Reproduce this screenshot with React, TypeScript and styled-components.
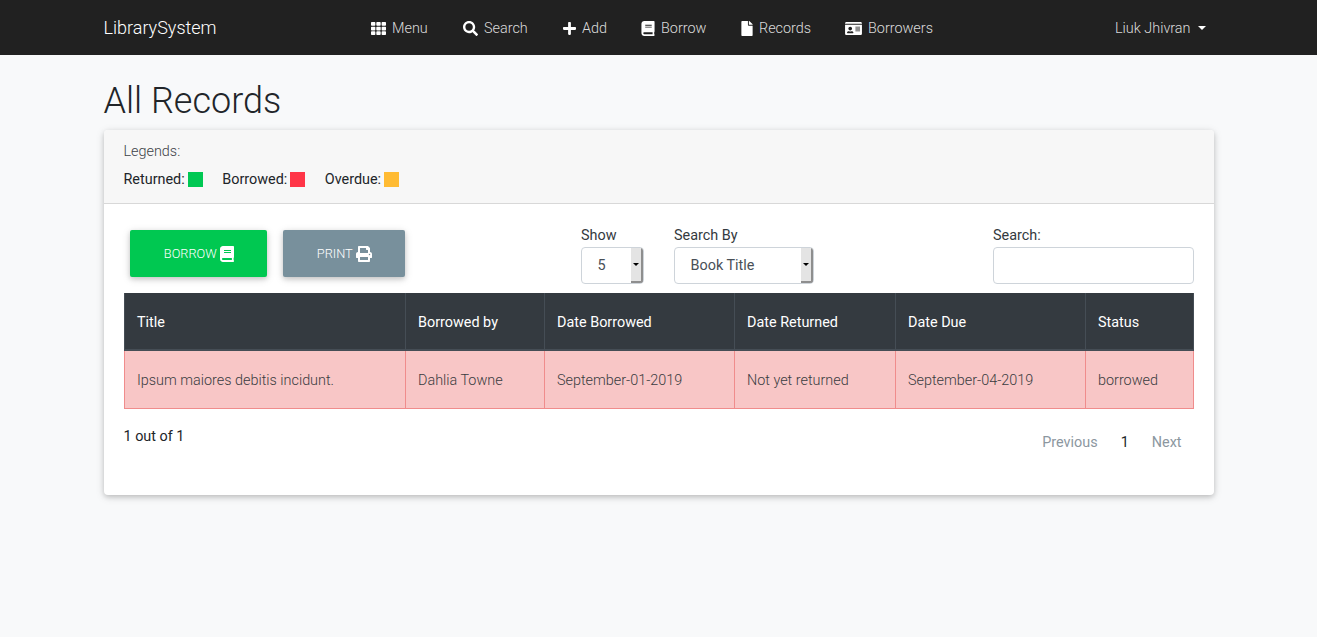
import { createGlobalStyle } from 'styled-components';
import styled from 'styled-components';
import { FaTh, FaSearch, FaPlus, FaBook, FaFile, FaIdCard, FaPrint } from 'react-icons/fa';

const GlobalStyle = createGlobalStyle`
  body {
    margin: 0;
    min-height: 100vh;
    background: #f8f9fa;
    font-family: Roboto, "Liberation Sans", sans-serif;
    font-size: 14px;
    font-weight: 300;
    color: #212529;
  }
`

const Navbar = styled.nav`
  height: 55px;
  background: #212121;
  color: #fff;
`

const Container = styled.div`
  width: 1110px;
  margin: 0 auto;
`

const NavInner = styled(Container)`
  height: 100%;
  display: flex;
  align-items: center;
`

const Brand = styled.a`
  font-size: 18px;
  font-weight: 300;
  width: 267px;
`

const NavLinks = styled.div`
  display: flex;
  flex: 1;
  margin-top: 1px;
`

const NavLink = styled.a<{ $width: number; $icon: number }>`
  display: flex;
  align-items: center;
  gap: 6.5px;
  width: ${p => p.$width}px;
  font-size: 14.4px;
  color: rgba(255, 255, 255, 0.85);
  svg {
    color: #fff;
    height: 15px;
    width: ${p => p.$icon}px;
  }
`

const UserMenu = styled.a`
  display: flex;
  align-items: center;
  font-size: 14.4px;
  margin: 1px 8px 0 0;
  color: rgba(255, 255, 255, 0.85);
  &::after {
    content: '';
    margin-left: 7px;
    border-top: 4px solid #fff;
    border-left: 4px solid transparent;
    border-right: 4px solid transparent;
  }
`

const Title = styled.h1`
  margin: 0;
  padding-top: 25px;
  height: 50px;
  font-size: 36px;
  line-height: 42px;
  font-weight: 300;
`

const Card = styled.section`
  background: #fff;
  border-radius: 4px;
  height: 365px;
  box-shadow: 0 2px 5px rgba(0, 0, 0, 0.16), 0 2px 10px rgba(0, 0, 0, 0.12);
  overflow: hidden;
`

const CardHeader = styled.header`
  height: 74px;
  box-sizing: border-box;
  padding: 14px 20px 0;
  background: #f7f7f7;
  border-bottom: 1px solid #d8d8d8;
`

const LegendTitle = styled.div`
  font-size: 14.4px;
  line-height: 16px;
  color: #3d4248;
`

const LegendRow = styled.div`
  display: flex;
  gap: 19.5px;
  margin-top: 12px;
`

const LegendItem = styled.span`
  display: flex;
  align-items: center;
  gap: 3px;
  font-size: 14.4px;
  font-weight: 400;
  line-height: 16px;
`

const Swatch = styled.i<{ $color: string }>`
  width: 15px;
  height: 15px;
  margin-top: -2px;
  background: ${p => p.$color};
`

const CardBody = styled.div`
  padding: 0 20px;
`

const Toolbar = styled.div`
  display: flex;
  height: 89px;
  box-sizing: border-box;
  padding-top: 23px;
`

const ActionButton = styled.button<{ $color: string; $width: number; $margin: number; $icon: number }>`
  width: ${p => p.$width}px;
  height: 47px;
  margin: 3px 0 0 ${p => p.$margin}px;
  padding: 0 0 0 2px;
  border: 0;
  border-radius: 2px;
  background: ${p => p.$color};
  color: #fff;
  font-family: inherit;
  font-size: 12.8px;
  font-weight: 300;
  box-shadow: 0 2px 5px rgba(0, 0, 0, 0.16), 0 2px 10px rgba(0, 0, 0, 0.12);
  display: flex;
  align-items: center;
  justify-content: center;
  gap: 3.5px;
  svg {
    height: 16px;
    width: ${p => p.$icon}px;
  }
`

const Field = styled.div<{ $margin: number }>`
  margin-left: ${p => p.$margin}px;
`

const FieldLabel = styled.div`
  font-size: 14.4px;
  font-weight: 400;
  line-height: 16px;
  color: #343a40;
  margin: 1px 0 3px;
  padding-left: 0.5px;
`

const FakeSelect = styled.div<{ $width: number }>`
  width: ${p => p.$width}px;
  height: 37px;
  box-sizing: border-box;
  border: 1px solid #ced4da;
  border-radius: 4px;
  display: flex;
  font-size: 14.4px;
  font-weight: 400;
  color: #495057;
  overflow: hidden;
`

const SelectValue = styled.span`
  flex: 1;
  padding-left: 16px;
  line-height: 35px;
`

const SelectArrow = styled.span`
  width: 10px;
  background: #e4e4e4;
  border-right: 2px solid #8e8e8e;
  border-bottom: 2px solid #8e8e8e;
  display: flex;
  align-items: center;
  justify-content: center;
  &::after {
    content: '';
    border-top: 3px solid #000;
    border-left: 3px solid transparent;
    border-right: 3px solid transparent;
  }
`

const SearchField = styled(Field)`
  margin-left: auto;
`

const SearchInput = styled.input`
  display: block;
  width: 201px;
  height: 37px;
  box-sizing: border-box;
  border: 1px solid #ced4da;
  border-radius: 4px;
  background: #fff;
`

const Table = styled.table`
  width: 1069px;
  border-collapse: collapse;
  table-layout: fixed;
  font-size: 14.4px;
`

const Th = styled.th<{ $width: number }>`
  width: ${p => p.$width}px;
  height: 57px;
  box-sizing: border-box;
  padding: 2px 12.5px 0;
  text-align: left;
  font-weight: 400;
  color: #fff;
  background: #343a40;
  border: 1px solid #454d55;
  border-top: 0;
  border-bottom-width: 2px;
`

const Td = styled.td`
  height: 58px;
  box-sizing: border-box;
  padding: 2px 12.5px 0;
  background: #f8c6c6;
  color: #3a3c41;
  border: 1px solid #f08c8c;
`

const Footer = styled.div`
  display: flex;
  justify-content: space-between;
  padding-top: 19px;
`

const Count = styled.div`
  font-size: 14.4px;
  font-weight: 400;
  line-height: 18px;
`

const Pager = styled.div`
  display: flex;
  gap: 22px;
  margin: 6px 12px 0 0;
  font-size: 14.4px;
  line-height: 17px;
  font-weight: 400;
  color: #8c979f;
`

const PagerCurrent = styled.span`
  color: #212529;
  margin: 0 1px;
`

const columns = [
  { label: 'Title', width: 281 },
  { label: 'Borrowed by', width: 139 },
  { label: 'Date Borrowed', width: 190 },
  { label: 'Date Returned', width: 161 },
  { label: 'Date Due', width: 190 },
  { label: 'Status', width: 108 },
];

const row = [
  'Ipsum maiores debitis incidunt.',
  'Dahlia Towne',
  'September-01-2019',
  'Not yet returned',
  'September-04-2019',
  'borrowed',
];

function App() {
  return (
    <>
      <GlobalStyle />
      <Navbar>
        <NavInner>
          <Brand>LibrarySystem</Brand>
          <NavLinks>
            <NavLink $width={92} $icon={15}><FaTh />Menu</NavLink>
            <NavLink $width={100} $icon={15}><FaSearch />Search</NavLink>
            <NavLink $width={78} $icon={13}><FaPlus />Add</NavLink>
            <NavLink $width={100} $icon={14}><FaBook />Borrow</NavLink>
            <NavLink $width={104} $icon={12}><FaFile />Records</NavLink>
            <NavLink $width={100} $icon={17}><FaIdCard />Borrowers</NavLink>
          </NavLinks>
          <UserMenu>Liuk Jhivran</UserMenu>
        </NavInner>
      </Navbar>
      <Container>
        <Title>All Records</Title>
        <Card>
          <CardHeader>
            <LegendTitle>Legends:</LegendTitle>
            <LegendRow>
              <LegendItem>Returned: <Swatch $color="#00c853" /></LegendItem>
              <LegendItem>Borrowed: <Swatch $color="#ff3547" /></LegendItem>
              <LegendItem>Overdue: <Swatch $color="#ffbb33" /></LegendItem>
            </LegendRow>
          </CardHeader>
          <CardBody>
            <Toolbar>
              <ActionButton $color="#00c851" $width={137} $margin={6} $icon={14}>BORROW <FaBook /></ActionButton>
              <ActionButton $color="#78909c" $width={122} $margin={16} $icon={16}>PRINT <FaPrint /></ActionButton>
              <Field $margin={176}>
                <FieldLabel>Show</FieldLabel>
                <FakeSelect $width={63}>
                  <SelectValue>5</SelectValue>
                  <SelectArrow />
                </FakeSelect>
              </Field>
              <Field $margin={30}>
                <FieldLabel>Search By</FieldLabel>
                <FakeSelect $width={140}>
                  <SelectValue>Book Title</SelectValue>
                  <SelectArrow />
                </FakeSelect>
              </Field>
              <SearchField $margin={0}>
                <FieldLabel>Search:</FieldLabel>
                <SearchInput />
              </SearchField>
            </Toolbar>
            <Table>
              <thead>
                <tr>
                  {columns.map(c => <Th key={c.label} $width={c.width}>{c.label}</Th>)}
                </tr>
              </thead>
              <tbody>
                <tr>
                  {row.map(cell => <Td key={cell}>{cell}</Td>)}
                </tr>
              </tbody>
            </Table>
            <Footer>
              <Count>1 out of 1</Count>
              <Pager>
                <span>Previous</span>
                <PagerCurrent>1</PagerCurrent>
                <span>Next</span>
              </Pager>
            </Footer>
          </CardBody>
        </Card>
      </Container>
    </>
  );
}

export default App;
